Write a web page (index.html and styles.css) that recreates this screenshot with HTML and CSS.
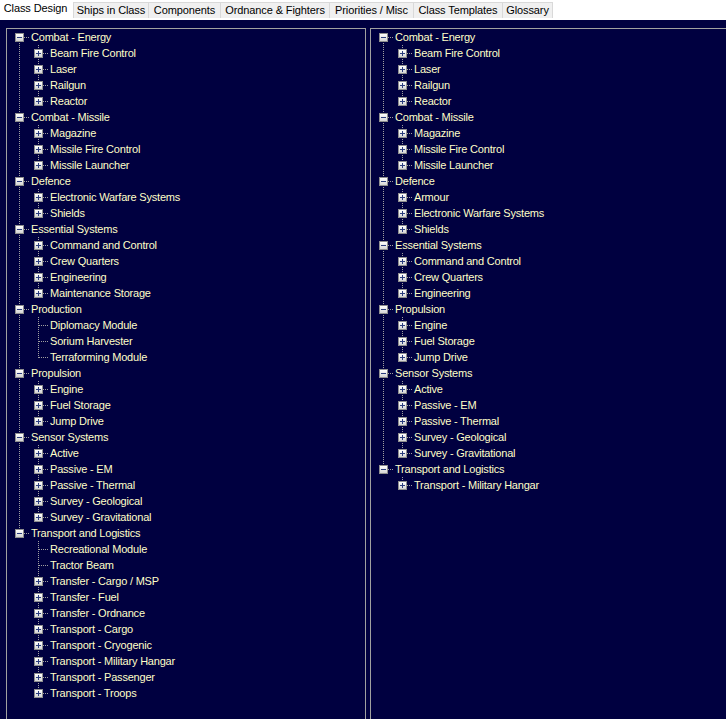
FILE: index.html
```html
<!DOCTYPE html>
<html>
<head>
<meta charset="utf-8">
<link rel="stylesheet" href="styles.css">
</head>
<body>
<div class="tabs">
  <div class="tab active">Class Design</div>
  <div class="tab first w-ships">Ships in Class</div>
  <div class="tab w-comp">Components</div>
  <div class="tab w-ord">Ordnance &amp; Fighters</div>
  <div class="tab w-prio">Priorities / Misc</div>
  <div class="tab w-tmpl">Class Templates</div>
  <div class="tab w-gloss">Glossary</div>
</div>
<div class="main">
  <div class="panel left">
    <div class="row"><span class="c first"><span class="box minus"></span></span><span class="t">Combat - Energy</span></div>
    <div class="row"><span class="c pipe"></span><span class="c tee"><span class="box plus"></span></span><span class="t">Beam Fire Control</span></div>
    <div class="row"><span class="c pipe"></span><span class="c tee"><span class="box plus"></span></span><span class="t">Laser</span></div>
    <div class="row"><span class="c pipe"></span><span class="c tee"><span class="box plus"></span></span><span class="t">Railgun</span></div>
    <div class="row"><span class="c pipe"></span><span class="c ell"><span class="box plus"></span></span><span class="t">Reactor</span></div>
    <div class="row"><span class="c tee"><span class="box minus"></span></span><span class="t">Combat - Missile</span></div>
    <div class="row"><span class="c pipe"></span><span class="c tee"><span class="box plus"></span></span><span class="t">Magazine</span></div>
    <div class="row"><span class="c pipe"></span><span class="c tee"><span class="box plus"></span></span><span class="t">Missile Fire Control</span></div>
    <div class="row"><span class="c pipe"></span><span class="c ell"><span class="box plus"></span></span><span class="t">Missile Launcher</span></div>
    <div class="row"><span class="c tee"><span class="box minus"></span></span><span class="t">Defence</span></div>
    <div class="row"><span class="c pipe"></span><span class="c tee"><span class="box plus"></span></span><span class="t">Electronic Warfare Systems</span></div>
    <div class="row"><span class="c pipe"></span><span class="c ell"><span class="box plus"></span></span><span class="t">Shields</span></div>
    <div class="row"><span class="c tee"><span class="box minus"></span></span><span class="t">Essential Systems</span></div>
    <div class="row"><span class="c pipe"></span><span class="c tee"><span class="box plus"></span></span><span class="t">Command and Control</span></div>
    <div class="row"><span class="c pipe"></span><span class="c tee"><span class="box plus"></span></span><span class="t">Crew Quarters</span></div>
    <div class="row"><span class="c pipe"></span><span class="c tee"><span class="box plus"></span></span><span class="t">Engineering</span></div>
    <div class="row"><span class="c pipe"></span><span class="c ell"><span class="box plus"></span></span><span class="t">Maintenance Storage</span></div>
    <div class="row"><span class="c tee"><span class="box minus"></span></span><span class="t">Production</span></div>
    <div class="row"><span class="c pipe"></span><span class="c tee"></span><span class="t">Diplomacy Module</span></div>
    <div class="row"><span class="c pipe"></span><span class="c tee"></span><span class="t">Sorium Harvester</span></div>
    <div class="row"><span class="c pipe"></span><span class="c ell"></span><span class="t">Terraforming Module</span></div>
    <div class="row"><span class="c tee"><span class="box minus"></span></span><span class="t">Propulsion</span></div>
    <div class="row"><span class="c pipe"></span><span class="c tee"><span class="box plus"></span></span><span class="t">Engine</span></div>
    <div class="row"><span class="c pipe"></span><span class="c tee"><span class="box plus"></span></span><span class="t">Fuel Storage</span></div>
    <div class="row"><span class="c pipe"></span><span class="c ell"><span class="box plus"></span></span><span class="t">Jump Drive</span></div>
    <div class="row"><span class="c tee"><span class="box minus"></span></span><span class="t">Sensor Systems</span></div>
    <div class="row"><span class="c pipe"></span><span class="c tee"><span class="box plus"></span></span><span class="t">Active</span></div>
    <div class="row"><span class="c pipe"></span><span class="c tee"><span class="box plus"></span></span><span class="t">Passive - EM</span></div>
    <div class="row"><span class="c pipe"></span><span class="c tee"><span class="box plus"></span></span><span class="t">Passive - Thermal</span></div>
    <div class="row"><span class="c pipe"></span><span class="c tee"><span class="box plus"></span></span><span class="t">Survey - Geological</span></div>
    <div class="row"><span class="c pipe"></span><span class="c ell"><span class="box plus"></span></span><span class="t">Survey - Gravitational</span></div>
    <div class="row"><span class="c ell"><span class="box minus"></span></span><span class="t">Transport and Logistics</span></div>
    <div class="row"><span class="c blank"></span><span class="c tee"></span><span class="t">Recreational Module</span></div>
    <div class="row"><span class="c blank"></span><span class="c tee"></span><span class="t">Tractor Beam</span></div>
    <div class="row"><span class="c blank"></span><span class="c tee"><span class="box plus"></span></span><span class="t">Transfer - Cargo / MSP</span></div>
    <div class="row"><span class="c blank"></span><span class="c tee"><span class="box plus"></span></span><span class="t">Transfer - Fuel</span></div>
    <div class="row"><span class="c blank"></span><span class="c tee"><span class="box plus"></span></span><span class="t">Transfer - Ordnance</span></div>
    <div class="row"><span class="c blank"></span><span class="c tee"><span class="box plus"></span></span><span class="t">Transport - Cargo</span></div>
    <div class="row"><span class="c blank"></span><span class="c tee"><span class="box plus"></span></span><span class="t">Transport - Cryogenic</span></div>
    <div class="row"><span class="c blank"></span><span class="c tee"><span class="box plus"></span></span><span class="t">Transport - Military Hangar</span></div>
    <div class="row"><span class="c blank"></span><span class="c tee"><span class="box plus"></span></span><span class="t">Transport - Passenger</span></div>
    <div class="row"><span class="c blank"></span><span class="c ell"><span class="box plus"></span></span><span class="t">Transport - Troops</span></div>
  </div>
  <div class="panel right">
    <div class="row"><span class="c first"><span class="box minus"></span></span><span class="t">Combat - Energy</span></div>
    <div class="row"><span class="c pipe"></span><span class="c tee"><span class="box plus"></span></span><span class="t">Beam Fire Control</span></div>
    <div class="row"><span class="c pipe"></span><span class="c tee"><span class="box plus"></span></span><span class="t">Laser</span></div>
    <div class="row"><span class="c pipe"></span><span class="c tee"><span class="box plus"></span></span><span class="t">Railgun</span></div>
    <div class="row"><span class="c pipe"></span><span class="c ell"><span class="box plus"></span></span><span class="t">Reactor</span></div>
    <div class="row"><span class="c tee"><span class="box minus"></span></span><span class="t">Combat - Missile</span></div>
    <div class="row"><span class="c pipe"></span><span class="c tee"><span class="box plus"></span></span><span class="t">Magazine</span></div>
    <div class="row"><span class="c pipe"></span><span class="c tee"><span class="box plus"></span></span><span class="t">Missile Fire Control</span></div>
    <div class="row"><span class="c pipe"></span><span class="c ell"><span class="box plus"></span></span><span class="t">Missile Launcher</span></div>
    <div class="row"><span class="c tee"><span class="box minus"></span></span><span class="t">Defence</span></div>
    <div class="row"><span class="c pipe"></span><span class="c tee"><span class="box plus"></span></span><span class="t">Armour</span></div>
    <div class="row"><span class="c pipe"></span><span class="c tee"><span class="box plus"></span></span><span class="t">Electronic Warfare Systems</span></div>
    <div class="row"><span class="c pipe"></span><span class="c ell"><span class="box plus"></span></span><span class="t">Shields</span></div>
    <div class="row"><span class="c tee"><span class="box minus"></span></span><span class="t">Essential Systems</span></div>
    <div class="row"><span class="c pipe"></span><span class="c tee"><span class="box plus"></span></span><span class="t">Command and Control</span></div>
    <div class="row"><span class="c pipe"></span><span class="c tee"><span class="box plus"></span></span><span class="t">Crew Quarters</span></div>
    <div class="row"><span class="c pipe"></span><span class="c ell"><span class="box plus"></span></span><span class="t">Engineering</span></div>
    <div class="row"><span class="c tee"><span class="box minus"></span></span><span class="t">Propulsion</span></div>
    <div class="row"><span class="c pipe"></span><span class="c tee"><span class="box plus"></span></span><span class="t">Engine</span></div>
    <div class="row"><span class="c pipe"></span><span class="c tee"><span class="box plus"></span></span><span class="t">Fuel Storage</span></div>
    <div class="row"><span class="c pipe"></span><span class="c ell"><span class="box plus"></span></span><span class="t">Jump Drive</span></div>
    <div class="row"><span class="c tee"><span class="box minus"></span></span><span class="t">Sensor Systems</span></div>
    <div class="row"><span class="c pipe"></span><span class="c tee"><span class="box plus"></span></span><span class="t">Active</span></div>
    <div class="row"><span class="c pipe"></span><span class="c tee"><span class="box plus"></span></span><span class="t">Passive - EM</span></div>
    <div class="row"><span class="c pipe"></span><span class="c tee"><span class="box plus"></span></span><span class="t">Passive - Thermal</span></div>
    <div class="row"><span class="c pipe"></span><span class="c tee"><span class="box plus"></span></span><span class="t">Survey - Geological</span></div>
    <div class="row"><span class="c pipe"></span><span class="c ell"><span class="box plus"></span></span><span class="t">Survey - Gravitational</span></div>
    <div class="row"><span class="c ell"><span class="box minus"></span></span><span class="t">Transport and Logistics</span></div>
    <div class="row"><span class="c blank"></span><span class="c ell"><span class="box plus"></span></span><span class="t">Transport - Military Hangar</span></div>
  </div>
</div>
</body>
</html>
```
FILE: styles.css
```css
html, body {
  margin: 0;
  padding: 0;
}
body {
  width: 726px;
  height: 719px;
  overflow: hidden;
  background: #000040;
  font-family: "Liberation Sans", Arial, sans-serif;
  font-size: 11px;
}
.tabs {
  display: flex;
  align-items: flex-start;
  height: 20px;
  background: #ffffff;
}
.tab {
  box-sizing: border-box;
  height: 16px;
  margin-top: 2px;
  background: #f0f0f0;
  border-top: 1px solid #d9d9d9;
  border-right: 1px solid #d9d9d9;
  color: #000;
  text-align: center;
  line-height: 14px;
  white-space: nowrap;
  letter-spacing: -0.1px;
  flex: none;
}
.tab.active {
  width: 73px;
  height: 20px;
  margin-top: 0;
  background: #ffffff;
  border: none;
  line-height: 17px;
  padding-right: 2px;
}
.tab.first { border-left: 1px solid #d9d9d9; }
.w-ships { width: 76px; }
.w-comp { width: 72px; }
.w-ord { width: 109px; }
.w-prio { width: 84px; }
.w-tmpl { width: 89px; }
.w-gloss { width: 50px; }

.main {
  display: flex;
  gap: 4px;
  padding: 8px 0 0 6px;
}
.panel {
  box-sizing: border-box;
  height: 720px;
  border: 1px solid #a0a0a0;
  padding-left: 3px;
  flex: none;
  overflow: hidden;
}
.left { width: 360px; }
.right {
  width: 356px;
  border-right: none;
}

.row {
  display: flex;
  height: 16px;
  align-items: flex-start;
}
.c {
  --v: repeating-linear-gradient(to bottom, #a0a0a0 0 1px, transparent 1px 2px);
  --h: repeating-linear-gradient(to right, #a0a0a0 0 1px, transparent 1px 2px);
  width: 19px;
  height: 16px;
  flex: none;
  box-sizing: border-box;
  padding: 4px 0 0 5px;
  background-repeat: no-repeat;
}
.tee {
  background-image: var(--v), var(--h);
  background-size: 1px 16px, 9px 1px;
  background-position: 9px 0, 10px 8px;
}
.ell {
  background-image: var(--v), var(--h);
  background-size: 1px 9px, 9px 1px;
  background-position: 9px 0, 10px 8px;
}
.first {
  background-image: var(--v), var(--h);
  background-size: 1px 8px, 9px 1px;
  background-position: 9px 8px, 10px 8px;
}
.pipe {
  background-image: var(--v);
  background-size: 1px 16px;
  background-position: 9px 0;
}
.box {
  display: block;
  box-sizing: border-box;
  width: 9px;
  height: 9px;
  border: 1px solid #8f8f8f;
  background-repeat: no-repeat;
}
.minus {
  background-image:
    linear-gradient(#2b3d7e, #2b3d7e),
    linear-gradient(#ffffff, #d4d4d4);
  background-size: 5px 1px, 100% 100%;
  background-position: center, 0 0;
}
.plus {
  background-image:
    linear-gradient(#2b3d7e, #2b3d7e),
    linear-gradient(#2b3d7e, #2b3d7e),
    linear-gradient(#ffffff, #d4d4d4);
  background-size: 5px 1px, 1px 5px, 100% 100%;
  background-position: center, center, 0 0;
}
.t {
  margin-left: 2px;
  color: #ffffc8;
  line-height: 16px;
  white-space: nowrap;
  letter-spacing: -0.2px;
}
```
